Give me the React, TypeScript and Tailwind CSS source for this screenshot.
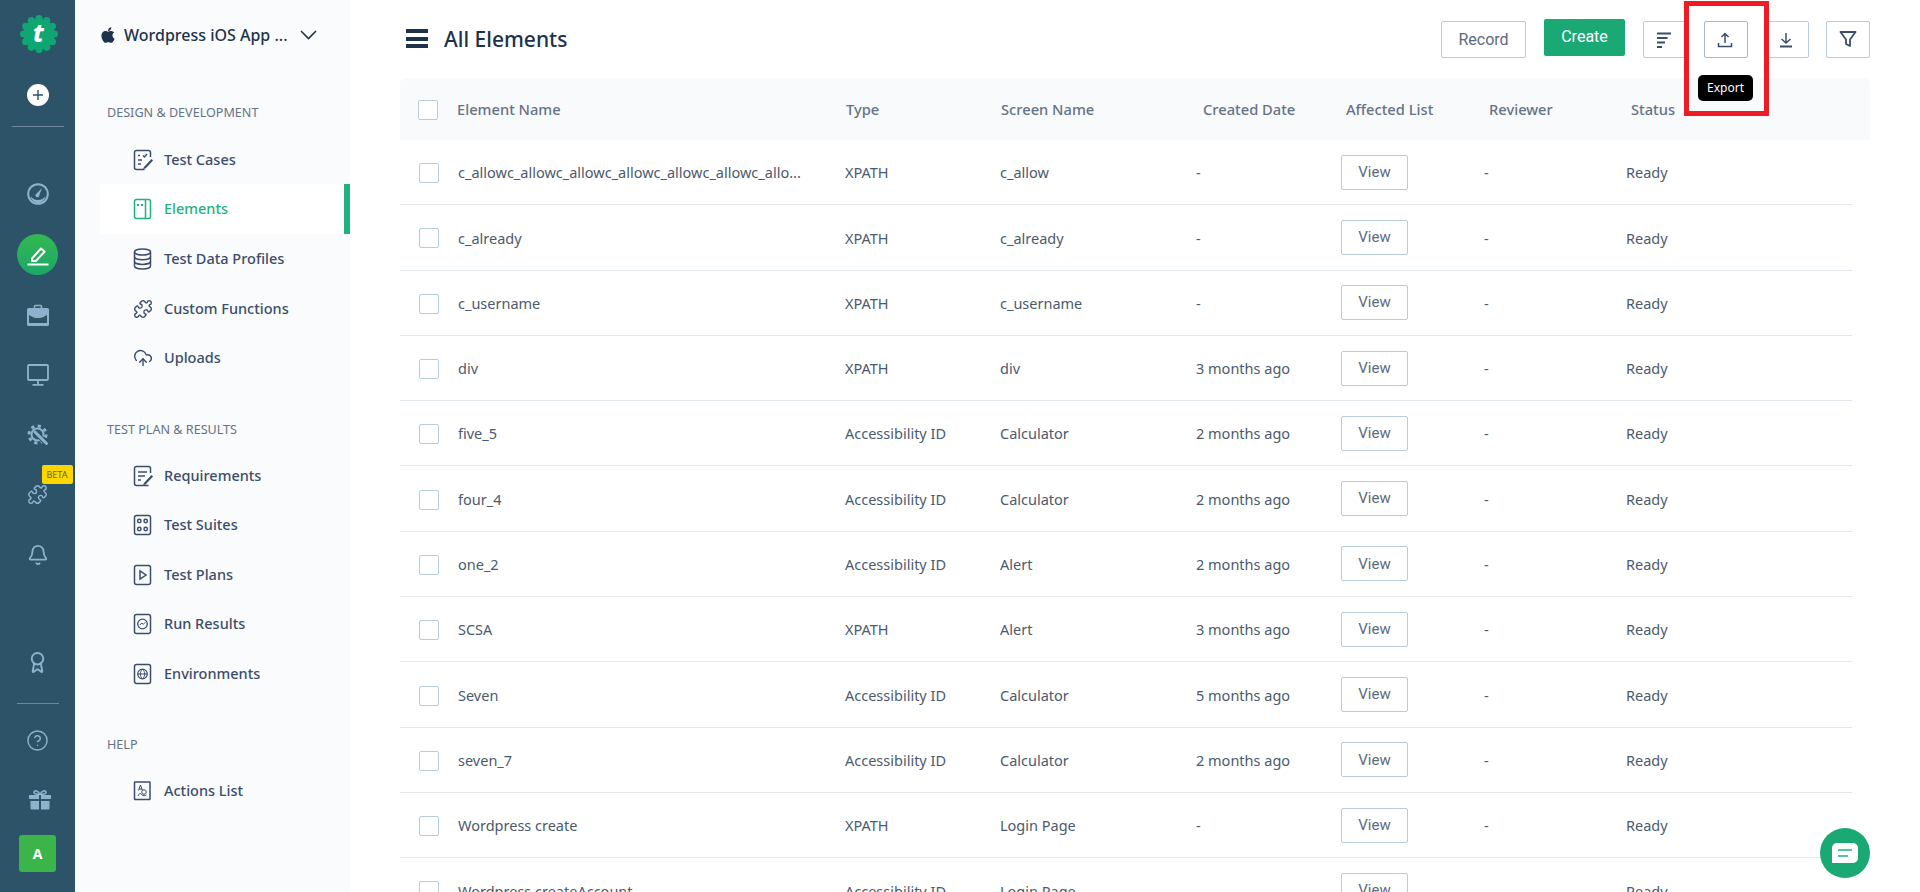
import type { ReactNode } from 'react'
import { Award, Bell, CircleHelp, CloudUpload, Puzzle } from 'lucide-react'
import { FaApple } from 'react-icons/fa'

const font = "font-['Noto_Sans','Open_Sans',sans-serif]"
const btnFont = "font-['Roboto',sans-serif]"

function Logo() {
  const lobes = Array.from({ length: 12 }, (_, i) => (i * Math.PI * 2) / 12)
  return (
    <svg width="38" height="38" viewBox="0 0 38 38">
      <circle cx="19" cy="19" r="15.5" fill="#0fa672" />
      {lobes.map((a) => (
        <circle
          key={a}
          cx={19 + 15.4 * Math.cos(a)}
          cy={19 + 15.4 * Math.sin(a)}
          r="3.6"
          fill="#0fa672"
        />
      ))}
      <text
        x="18.5"
        y="27"
        textAnchor="middle"
        fontSize="25"
        fontWeight="800"
        fontStyle="italic"
        fill="#fff"
        fontFamily="'Noto Sans', sans-serif"
      >
        t
      </text>
    </svg>
  )
}

function Rail() {
  const c = 'text-[#8fb2cc]'
  return (
    <aside className="flex h-full w-[75px] shrink-0 flex-col items-center bg-[#2c5368]">
      <div className="mt-[15px] h-[38px] w-[38px] translate-x-[1px]">
        <Logo />
      </div>
      <div className="mt-[31px] flex h-[22px] w-[22px] items-center justify-center rounded-full bg-white text-[#2c5368]">
        <svg width="12" height="12" viewBox="0 0 12 12" stroke="currentColor" strokeWidth="1.4">
          <path d="M6 1v10M1 6h10" />
        </svg>
      </div>
      <div className="mt-[20px] h-px w-[52px] bg-[#6d8a9a]" />
      <svg className={`mt-[56px] ${c}`} width="22" height="22" viewBox="0 0 22 22" fill="none">
        <circle cx="11" cy="11" r="9.8" stroke="currentColor" strokeWidth="2" />
        <path d="M3.500 13.500c1 4 4 6.500 7.500 6.500s6.500-2.500 7.500-6.500C16 16 14 17 11 17s-5-1-7.500-3.500Z" fill="currentColor" />
        <path d="M15 5 12.400 12a2 2 0 1 1-2.800-1.500Z" fill="currentColor" />
      </svg>
      <div className="mt-[29px] flex h-[41px] w-[41px] items-center justify-center rounded-full bg-gradient-to-b from-[#33b850] to-[#1aa868]">
        <svg width="22" height="22" viewBox="0 0 22 22" fill="none" stroke="#fff" strokeWidth="2">
          <path d="M5 14.500 14 4.500l3.600 3.200-8.800 9.300H5Z" strokeLinejoin="round" />
          <path d="M0.500 20.500h21" />
        </svg>
      </div>
      <svg className={`mt-[29px] ${c}`} width="22" height="22" viewBox="0 0 22 22" fill="none">
        <path d="M7.500 4V2.500a1 1 0 0 1 1-1h5a1 1 0 0 1 1 1V4" stroke="currentColor" strokeWidth="1.600" />
        <path d="M0 5.500a1.500 1.500 0 0 1 1.500-1.500h19A1.500 1.500 0 0 1 22 5.500v15a1.500 1.500 0 0 1-1.500 1.500h-19A1.500 1.500 0 0 1 0 20.500Z" fill="currentColor" />
        <path d="M2 11c4 2.500 6 3 9 3s5-.5 9-3v8H2Z" fill="#2c5368" />
      </svg>
      <svg className={`mt-[38px] ${c}`} width="22" height="22" viewBox="0 0 22 22" fill="none" stroke="currentColor" strokeWidth="1.800">
        <rect x="1" y="1" width="20" height="15" rx="1" />
        <path d="M11 16v4M5.500 20.800h11" />
      </svg>
      <svg className={`mt-[38px] ${c}`} width="22" height="22" viewBox="0 0 22 22" fill="none" stroke="currentColor">
        <circle cx="10.500" cy="10.500" r="8.500" strokeWidth="3" strokeDasharray="3.200 3.470" />
        <circle cx="10.500" cy="10.500" r="6" strokeWidth="2" />
        <path d="m9 9 10.500 10.500" stroke="#2c5368" strokeWidth="5" />
        <path d="m8 8 11.500 11.500" strokeWidth="3" strokeLinecap="round" />
      </svg>
      <div className="relative mt-[38px] h-[20px] w-[22px]">
        <Puzzle className={c} size={21} strokeWidth={1.700} />
        <span className="absolute left-[15px] top-[-19px] flex h-[19px] w-[31px] items-center justify-center rounded-[2px] bg-[#fdd600] text-[9px] text-[#5f6a3a]">
          BETA
        </span>
      </div>
      <Bell className={`mt-[40px] ${c}`} size={22} strokeWidth={2} />
      <Award className={`mt-[85px] ${c}`} size={23} strokeWidth={2} />
      <div className="mt-[29px] h-px w-[42px] bg-[#6d8a9a]" />
      <CircleHelp className={`mt-[25px] ${c}`} size={23} strokeWidth={1.500} />
      <svg className={`mt-[38px] translate-x-[2px] ${c}`} width="22" height="20" viewBox="0 0 22 20" fill="currentColor">
        <path d="M0 5h10v4H0ZM12 5h10v4H12ZM1.500 11H10v8.500H2.500a1 1 0 0 1-1-1ZM12 11h8.500v7.500a1 1 0 0 1-1 1H12Z" />
        <path d="M11 4.500C9 .5 5.500 0 5 2.200 4.600 4 8 4.500 11 4.500Zm0 0C13 .5 16.500 0 17 2.200c.4 1.800-3 2.300-6 2.300Z" fill="none" stroke="currentColor" strokeWidth="1.600" />
      </svg>
      <div className="mt-[25px] flex h-[37px] w-[37px] items-center justify-center rounded-[3px] bg-[#3bb54a] text-[14px] font-bold text-white">
        A
      </div>
    </aside>
  )
}

function NavIcon({ children }: { children: ReactNode }) {
  return (
    <svg width="20" height="22" viewBox="0 0 20 22" fill="none" stroke="currentColor" strokeWidth="1.500">
      {children}
    </svg>
  )
}

const Frame = () => <rect x="1.500" y="1.500" width="16" height="19" rx="2" />

function NavItem({ icon, label, active }: { icon: ReactNode; label: string; active?: boolean }) {
  return (
    <div
      className={
        active
          ? 'mb-[1px] -mt-[1px] flex h-[50px] items-center border-r-[6px] border-[#1fb27f] bg-white pl-[33px] text-[#1fb27f]'
          : 'flex h-[49.500px] items-center pl-[33px] text-[#3c4d6b]'
      }
    >
      <span className="flex w-[31px] shrink-0">{icon}</span>
      <span className="text-[14.500px] font-medium">{label}</span>
    </div>
  )
}

function SectionTitle({ children, className }: { children: ReactNode; className: string }) {
  return <div className={`pl-[7px] text-[12.600px] leading-[20px] text-[#667285] ${className}`}>{children}</div>
}

function SubNav() {
  return (
    <nav className="h-full w-[275px] shrink-0 bg-[#fafbfd]">
      <div className="ml-[25px] flex h-[71px] items-center pb-[1px] text-[#1d3349]">
        <FaApple size={18} className="shrink-0 -translate-x-px" />
        <span className="ml-[6px] text-[16px] font-medium">Wordpress iOS App ...</span>
        <svg className="ml-[12px]" width="17" height="10" viewBox="0 0 17 10" fill="none" stroke="currentColor" strokeWidth="1.600">
          <path d="m1 1 7.500 7.500L16 1" />
        </svg>
      </div>
      <div className="ml-[25px]">
        <SectionTitle className="mt-[32px] mb-[12px]">DESIGN &amp; DEVELOPMENT</SectionTitle>
        <NavItem
          label="Test Cases"
          icon={
            <NavIcon>
              <path d="M17.500 8V3.500a2 2 0 0 0-2-2h-12a2 2 0 0 0-2 2v15a2 2 0 0 0 2 2h8" />
              <path d="M5 6.500h2M10 6.500l1.500 1.500L14 5M5 11h4M5 15h3" />
              <path d="m11 18 7.500-8 1.500 1.500-7.500 8-2.500.5Z" fill="currentColor" stroke="none" />
            </NavIcon>
          }
        />
        <NavItem
          active
          label="Elements"
          icon={
            <NavIcon>
              <Frame />
              <path d="M12.500 1.500v19" />
              <path d="M5 6v2M9 6v2" strokeWidth="2" />
            </NavIcon>
          }
        />
        <NavItem
          label="Test Data Profiles"
          icon={
            <NavIcon>
              <ellipse cx="9.500" cy="4" rx="8" ry="3" />
              <path d="M1.500 4v14c0 1.700 3.600 3 8 3s8-1.300 8-3V4" />
              <path d="M1.500 8.700c0 1.700 3.600 3 8 3s8-1.300 8-3M1.500 13.400c0 1.700 3.600 3 8 3s8-1.300 8-3" />
            </NavIcon>
          }
        />
        <NavItem label="Custom Functions" icon={<Puzzle size={20} strokeWidth={1.700} />} />
        <NavItem label="Uploads" icon={<CloudUpload size={20} strokeWidth={1.700} />} />
        <SectionTitle className="mt-[37px] mb-[11px]">TEST PLAN &amp; RESULTS</SectionTitle>
        <NavItem
          label="Requirements"
          icon={
            <NavIcon>
              <path d="M17.500 8V3.500a2 2 0 0 0-2-2h-12a2 2 0 0 0-2 2v15a2 2 0 0 0 2 2h12" />
              <path d="M5 7h9M5 11h7M5 15h3" />
              <path d="m11 18 7.500-8 1.500 1.500-7.500 8-2.500.5Z" fill="currentColor" stroke="none" />
            </NavIcon>
          }
        />
        <NavItem
          label="Test Suites"
          icon={
            <NavIcon>
              <Frame />
              <circle cx="6.300" cy="7" r="1.700" />
              <circle cx="12.700" cy="7" r="1.700" />
              <circle cx="6.300" cy="15" r="1.700" />
              <circle cx="12.700" cy="15" r="1.700" />
            </NavIcon>
          }
        />
        <NavItem
          label="Test Plans"
          icon={
            <NavIcon>
              <Frame />
              <path d="M7 7v8l6-4Z" />
            </NavIcon>
          }
        />
        <NavItem
          label="Run Results"
          icon={
            <NavIcon>
              <Frame />
              <circle cx="9.500" cy="11" r="4.800" strokeWidth="1.300" />
              <path d="m6.800 12 2-2 1.500 1.300 2-2" strokeWidth="1" />
            </NavIcon>
          }
        />
        <NavItem
          label="Environments"
          icon={
            <NavIcon>
              <Frame />
              <circle cx="9.500" cy="11" r="4.800" strokeWidth="1.200" />
              <path d="M4.700 11h9.600M9.500 6.200c-3 3-3 6.600 0 9.600 3-3 3-6.600 0-9.600Z" strokeWidth="1" />
            </NavIcon>
          }
        />
        <SectionTitle className="mt-[36px] mb-[12px]">HELP</SectionTitle>
        <NavItem
          label="Actions List"
          icon={
            <NavIcon>
              <rect x="1.500" y="2" width="15.500" height="17.500" rx="0.500" />
              <path d="M5.500 10.500 7.500 5l2 5.500M6 9h3" strokeWidth="1" />
              <circle cx="11" cy="12" r="2.300" strokeWidth="1" />
              <path d="M5 16c1-3 3-3 4-1 1 1 3 1 4.500 0" strokeWidth="1" />
            </NavIcon>
          }
        />
      </div>
    </nav>
  )
}

function IconButton({ children, dark }: { children: ReactNode; dark?: boolean }) {
  return (
    <button
      className={
        dark
          ? 'flex h-[37px] w-[44px] items-center justify-center rounded-[2px] border border-[#a9b8c5] bg-white text-[#3c4d6b]'
          : 'flex h-[37px] w-[44px] items-center justify-center rounded-[2px] border border-[#b8cbd9] bg-white text-[#3c4d6b]'
      }
    >
      {children}
    </button>
  )
}

function Toolbar() {
  return (
    <header className="relative flex h-[78px] items-start pl-[56px] pr-[50px]">
      <div className="mt-[29px] flex w-[22px] flex-col gap-[3.500px]">
        <span className="h-[4px] bg-[#1d3349]" />
        <span className="h-[4px] bg-[#1d3349]" />
        <span className="h-[4px] bg-[#1d3349]" />
      </div>
      <h1 className="ml-[16px] mt-[23px] text-[21px] font-medium leading-[32px] text-[#1d3349]">All Elements</h1>
      <div className={`ml-auto mt-[19px] flex items-start ${btnFont}`}>
        <button className="mt-[2px] h-[37px] w-[85px] rounded-[2px] border border-[#b8cbd9] bg-white text-[16px] text-[#5a6b80]">
          Record
        </button>
        <button className="ml-[18px] h-[37px] w-[81px] rounded-[2px] bg-[#1aa874] pb-[2px] text-[16px] text-white">
          Create
        </button>
        <div className="ml-[18px] mt-[2px] flex gap-[17px]">
          <IconButton>
            <svg className="-translate-x-px" width="16" height="16" viewBox="0 0 16 16" stroke="currentColor" strokeWidth="2">
              <path d="M1 1.500h14M1 6h10.500M1 10.500h8M1 15h5" />
            </svg>
          </IconButton>
          <IconButton dark>
            <svg className="-translate-x-px" width="16" height="16" viewBox="0 0 16 16" fill="none" stroke="currentColor" strokeWidth="1.500">
              <path d="M8 11V1.500M4.500 5 8 1.500 11.500 5M1.500 11v3.500h13V11" />
            </svg>
          </IconButton>
          <IconButton>
            <svg className="-translate-x-px" width="16" height="16" viewBox="0 0 16 16" fill="none" stroke="currentColor" strokeWidth="1.500">
              <path d="M8 1v9.500M3.500 7 8 11l4.500-4" />
              <path d="M2 14.500h12" strokeWidth="2" />
            </svg>
          </IconButton>
          <IconButton>
            <svg width="18" height="17" viewBox="0 0 18 17" fill="none" stroke="currentColor" strokeWidth="1.800">
              <path d="M1.500 1h15L11 8.500V15l-4-2V8.500Z" strokeLinejoin="round" />
            </svg>
          </IconButton>
        </div>
      </div>
      <div className="absolute left-[1334px] top-[1px] h-[115px] w-[85px] border-[5px] border-[#ed1c24]" />
      <div className="absolute left-[1348px] top-[75px] flex h-[26px] w-[55px] items-center justify-center rounded-[5px] bg-black text-[12px] text-white">
        Export
      </div>
    </header>
  )
}

type Row = { name: string; type: string; screen: string; date: string }

const XP = 'XPATH'
const AC = 'Accessibility ID'

const rows: Row[] = [
  { name: 'c_allowc_allowc_allowc_allowc_allowc_allowc_allo...', type: XP, screen: 'c_allow', date: '-' },
  { name: 'c_already', type: XP, screen: 'c_already', date: '-' },
  { name: 'c_username', type: XP, screen: 'c_username', date: '-' },
  { name: 'div', type: XP, screen: 'div', date: '3 months ago' },
  { name: 'five_5', type: AC, screen: 'Calculator', date: '2 months ago' },
  { name: 'four_4', type: AC, screen: 'Calculator', date: '2 months ago' },
  { name: 'one_2', type: AC, screen: 'Alert', date: '2 months ago' },
  { name: 'SCSA', type: XP, screen: 'Alert', date: '3 months ago' },
  { name: 'Seven', type: AC, screen: 'Calculator', date: '5 months ago' },
  { name: 'seven_7', type: AC, screen: 'Calculator', date: '2 months ago' },
  { name: 'Wordpress create', type: XP, screen: 'Login Page', date: '-' },
  { name: 'Wordpress createAccount', type: AC, screen: 'Login Page', date: '-' },
]

function Checkbox() {
  return <span className="block h-[20px] w-[20px] translate-y-px rounded-[2px] border border-[#b8cbd9] bg-white" />
}

function Cell({ children }: { children: ReactNode }) {
  return <span className="whitespace-nowrap pt-[2px]">{children}</span>
}

function Table() {
  return (
    <div className="ml-[50px] mr-[50px]">
      <div className="grid h-[62px] grid-cols-[57px_389px_155px_202px_143px_143px_142px_1fr] items-center rounded-t-[6px] bg-[#f9fafc] text-[14.700px] font-medium text-[#667285]">
        <span className="pl-[18px]">
          <Checkbox />
        </span>
        <span>Element Name</span>
        <span>Type</span>
        <span>Screen Name</span>
        <span>Created Date</span>
        <span>Affected List</span>
        <span>Reviewer</span>
        <span>Status</span>
      </div>
      <div className="mr-[18px]">
        {rows.map((r) => (
          <div
            key={r.name}
            className="grid h-[65.300px] grid-cols-[58px_387px_155px_196px_145px_143px_142px_1fr] items-center border-b border-[#e2e8ee] text-[14.500px] text-[#4c5a6e]"
          >
            <span className="pl-[19px]">
              <Checkbox />
            </span>
            <Cell>{r.name}</Cell>
            <Cell>{r.type}</Cell>
            <Cell>{r.screen}</Cell>
            <Cell>{r.date}</Cell>
            <span>
              <button className={`h-[35px] w-[67px] rounded-[2px] border border-[#b8cbd9] bg-white text-[15px] text-[#5a6b80] ${btnFont}`}>
                View
              </button>
            </span>
            <Cell>-</Cell>
            <Cell>Ready</Cell>
          </div>
        ))}
      </div>
    </div>
  )
}

export default function App() {
  return (
    <div className={`relative flex h-[892px] w-[1920px] overflow-hidden bg-white ${font}`}>
      <Rail />
      <SubNav />
      <main className="min-w-0 flex-1">
        <Toolbar />
        <Table />
      </main>
      <button className="absolute left-[1820px] top-[828px] flex h-[50px] w-[50px] items-center justify-center rounded-full bg-[#1aa874]">
        <svg width="26" height="20" viewBox="0 0 26 20">
          <path d="M5 0h16a5 5 0 0 1 5 5v10a5 5 0 0 1-5 5H0V5a5 5 0 0 1 5-5Z" fill="#fff" />
          <path d="M6 7h14M6 13h10" stroke="#1fb27f" strokeWidth="1.600" />
        </svg>
      </button>
    </div>
  )
}
